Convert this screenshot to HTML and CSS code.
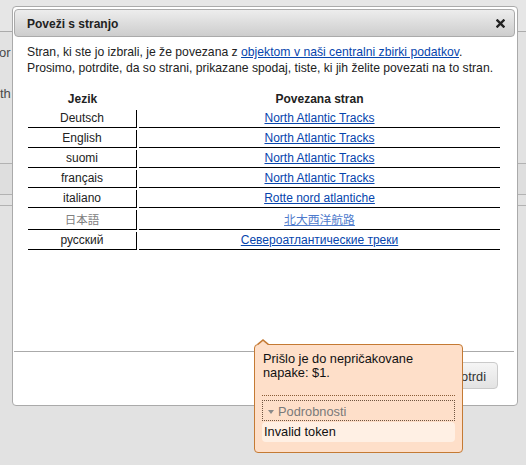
FILE: index.html
```html
<!DOCTYPE html>
<html lang="sl">
<head>
<meta charset="utf-8">
<title>Poveži s stranjo</title>
<link rel="stylesheet" href="styles.css">
</head>
<body>
<div class="page">
  <div class="page-head"></div>
  <p class="page-line page-line-a">or</p>
  <p class="page-line page-line-b">th</p>
  <div class="page-rule page-rule-a"></div>
  <div class="page-rule page-rule-b"></div>
  <div class="page-rule page-rule-c"></div>
</div>

<div class="dialog">
  <div class="dialog-head">
    <span class="dialog-title">Poveži s stranjo</span>
    <svg class="dialog-close" width="9" height="9" viewBox="0 0 9 9" aria-hidden="true">
      <path d="M1.4 1.4 L7.6 7.6 M7.6 1.4 L1.4 7.6" stroke="#222" stroke-width="2.3" stroke-linecap="square" fill="none"/>
    </svg>
  </div>
  <div class="dialog-body">
    <p class="intro">Stran, ki ste jo izbrali, je že povezana z <a href="#">objektom v naši centralni zbirki podatkov</a>. Prosimo, potrdite, da so strani, prikazane spodaj, tiste, ki jih želite povezati na to stran.</p>
    <table class="langs">
      <thead>
        <tr><th class="col-lang">Jezik</th><th class="col-page">Povezana stran</th></tr>
      </thead>
      <tbody>
        <tr><td class="col-lang">Deutsch</td><td class="col-page"><a href="#">North Atlantic Tracks</a></td></tr>
        <tr><td class="col-lang">English</td><td class="col-page"><a href="#">North Atlantic Tracks</a></td></tr>
        <tr><td class="col-lang">suomi</td><td class="col-page"><a href="#">North Atlantic Tracks</a></td></tr>
        <tr><td class="col-lang">français</td><td class="col-page"><a href="#">North Atlantic Tracks</a></td></tr>
        <tr><td class="col-lang">italiano</td><td class="col-page"><a href="#">Rotte nord atlantiche</a></td></tr>
        <tr><td class="col-lang cjk">日本語</td><td class="col-page"><a class="cjk-link" href="#">北大西洋航路</a></td></tr>
        <tr><td class="col-lang">русский</td><td class="col-page"><a href="#">Североатлантические треки</a></td></tr>
      </tbody>
    </table>
  </div>
  <div class="dialog-foot">
    <button class="btn" type="button">Potrdi</button>
  </div>
</div>

<div class="tip">
  <div class="tip-msg">Prišlo je do nepričakovane napake: $1.</div>
  <div class="tip-sep"></div>
  <div class="tip-details"><span class="tip-arrow"></span>Podrobnosti</div>
  <div class="tip-error">Invalid token</div>
</div>
</body>
</html>
```

FILE: styles.css
```css
html, body {
  margin: 0;
  padding: 0;
}
body {
  width: 526px;
  height: 465px;
  overflow: hidden;
  background: #e2e2e2;
  font-family: "Liberation Sans", Arial, "Noto Sans CJK JP", sans-serif;
  color: #222;
  position: relative;
}

/* page underneath the modal */
.page {
  height: 465px;
}
.page-head {
  height: 31px;
  border-bottom: 1px solid #ababab;
  background: #e6e6e6;
}
.page-line {
  margin: 0;
  font-size: 13px;
  line-height: 16px;
  color: #4a4a4a;
}
.page-line-a {
  margin-top: 13px;
  margin-left: -1px;
}
.page-line-b {
  margin-top: 25px;
}
.page-rule {
  border-top: 1px solid #b2b2b2;
}
.page-rule-a {
  margin-top: 61px;
  height: 30px;
  background: #dedede;
}
.page-rule-b {
  height: 10px;
}

/* dialog */
.dialog {
  position: absolute;
  left: 12px;
  top: 6px;
  width: 504px;
  height: 398px;
  border: 1px solid #aaa;
  border-radius: 4px;
  background: #fff;
  display: flex;
  flex-direction: column;
}
.dialog-head {
  margin: 2px 2px 0 1px;
  height: 26px;
  border: 1px solid #aaa;
  border-radius: 4px;
  background: linear-gradient(#ededed, #cdcdcd);
  display: flex;
  align-items: center;
  justify-content: space-between;
  padding: 0 9px 0 12px;
}
.dialog-title {
  font-size: 12px;
  font-weight: bold;
  line-height: 26px;
  padding-top: 1px;
  color: #222;
}
.dialog-close {
  display: block;
}
.dialog-body {
  flex: 1;
  padding: 7px 14px 0;
}
.intro {
  margin: 0 0 13px;
  font-size: 12.2px;
  line-height: 16px;
  color: #222;
}
a {
  color: #0645ad;
  text-decoration: underline;
}

.langs {
  table-layout: fixed;
  border-collapse: separate;
  border-spacing: 2px;
  width: 476px;
  margin-left: -1px;
  font-size: 12px;
  color: #222;
}
.langs th {
  padding: 0;
  line-height: 17px;
  font-weight: bold;
  text-align: center;
}
.langs th.col-lang {
  width: 109px;
}
.langs td {
  padding: 0;
  line-height: 17px;
  text-align: center;
  border-bottom: 1px solid #000;
  white-space: nowrap;
}
.langs td.col-lang {
  border-right: 1px solid #000;
}
.cjk {
  font-family: "Noto Sans CJK JP", sans-serif;
  font-size: 11.5px;
  color: #808080;
}
.cjk-link {
  font-family: "Noto Sans CJK JP", sans-serif;
  font-size: 11.8px;
  color: #4f7bcc;
}

.dialog-foot {
  margin: 0 3px 0 1px;
  height: 43px;
  border-top: 1px solid #aaa;
  padding: 10px 16px 0 0;
  display: flex;
  justify-content: flex-end;
  align-items: flex-start;
}
.btn {
  height: 27px;
  padding: 0 11px 0 12px;
  border: 1px solid #cacaca;
  border-radius: 4px;
  background: linear-gradient(#f5f5f5, #e3e3e3);
  font-family: "Liberation Sans", Arial, sans-serif;
  font-size: 12.8px;
  color: #333;
  line-height: 25px;
  padding-top: 1px;
}

/* error tooltip */
.tip {
  position: absolute;
  left: 254px;
  top: 344px;
  width: 193px;
  padding: 7px 7px 10px 7px;
  border: 1px solid #c47a34;
  border-radius: 4px;
  background: #fedfc9;
  font-size: 12.8px;
  color: #111;
}
.tip::before,
.tip::after {
  content: "";
  position: absolute;
  left: 2px;
  width: 0;
  height: 0;
  border-left: 6px solid transparent;
  border-right: 6px solid transparent;
}
.tip::before {
  top: -6px;
  border-bottom: 5px solid #c47a34;
}
.tip::after {
  top: -4px;
  border-bottom: 5px solid #fedfc9;
}
.tip-msg {
  line-height: 14px;
  padding-left: 1px;
}
.tip-sep {
  margin-top: 15px;
  border-top: 1px dotted #8a5c36;
}
.tip-details {
  margin-top: 4px;
  height: 17px;
  padding: 2px 0 0 5px;
  border: 1px dotted #6f5440;
  line-height: 17px;
  color: #7a7a7a;
  display: flex;
  align-items: center;
}
.tip-arrow {
  width: 0;
  height: 0;
  border-left: 3.5px solid transparent;
  border-right: 3.5px solid transparent;
  border-top: 4px solid #8a8a8a;
  margin: 0 4px 0 0;
}
.tip-error {
  margin-top: 1px;
  height: 20px;
  line-height: 20px;
  padding-left: 2px;
  border-radius: 4px;
  background: #fff0e4;
  color: #111;
}
```
